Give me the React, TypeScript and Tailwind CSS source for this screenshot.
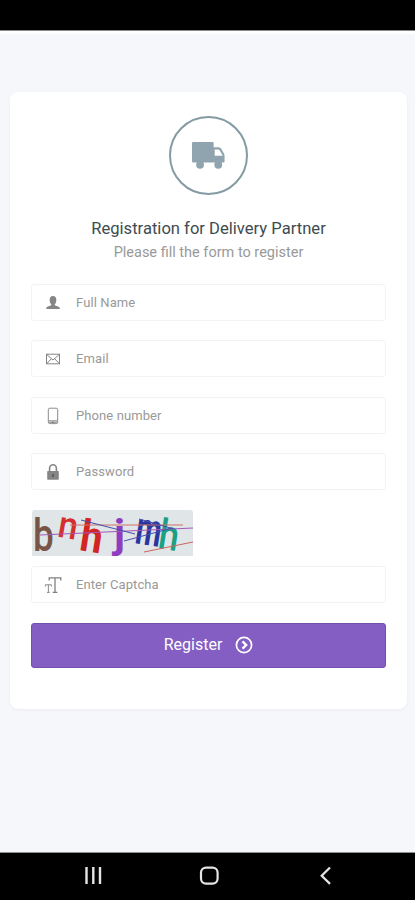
import React from 'react';

const UserIcon = () => (
  <svg width="16" height="16" viewBox="0 0 16 16" fill="#858585">
    <ellipse cx="8" cy="5.2" rx="3.3" ry="4.2" />
    <path d="M6.3 8h3.4v2.2l4 1.6c.7.3 1.1.9 1.1 1.6V14H1.2v-.6c0-.7.4-1.3 1.1-1.6l4-1.6z" />
  </svg>
);

const MailIcon = () => (
  <svg width="16" height="16" viewBox="0 0 16 16" fill="none" stroke="#858585" strokeWidth="1">
    <rect x="1.5" y="3.2" width="13" height="9.6" />
    <path d="M1.8 3.6 8 9l6.2-5.4M1.8 12.5l4.4-4.6M14.2 12.5 9.8 7.9" />
  </svg>
);

const PhoneIcon = () => (
  <svg width="18" height="18" viewBox="0 0 18 18" fill="none" stroke="#8c8c8c">
    <rect x="4.3" y="1.2" width="9.4" height="15.4" rx="1.6" />
    <path d="M4.5 13.8h9" />
    <path d="M4.8 14.4h8.4l-.8 2H5.6z" fill="#a3a3a3" stroke="none" />
    <circle cx="9" cy="15.2" r=".8" fill="#666" stroke="none" />
  </svg>
);

const LockIcon = () => (
  <svg width="18" height="18" viewBox="0 0 18 18" fill="none">
    <path d="M5.6 8.5V5.2a3.4 3.4 0 0 1 6.8 0v3.3" stroke="#858585" strokeWidth="1.6" />
    <rect x="3.2" y="8" width="11.6" height="8.8" rx=".8" fill="#858585" />
    <path d="M9 11v3" stroke="#555" strokeWidth="1.6" />
  </svg>
);

const TextIcon = () => (
  <svg width="18" height="18" viewBox="0 0 18 18" fill="none" stroke="#808080">
    <path d="M5.2 4.4V1.8h11.6v2.6M11 1.8v14.4M8.6 16.4h4.8" strokeWidth="1.3" />
    <path d="M1.4 10.6V8.8h6v1.8M4.4 8.8v7.4M3 16.4h2.8" strokeWidth=".9" />
  </svg>
);

interface FieldProps {
  icon: React.ReactNode;
  label: string;
  type?: string;
}

const Field = ({ icon, label, type = 'text' }: FieldProps) => (
  <label className="flex h-[37px] items-center rounded-[3px] border border-[#f3f3f3] bg-white">
    <span className="flex w-[42px] shrink-0 justify-center pt-px">{icon}</span>
    <input
      type={type}
      placeholder={label}
      className="w-full min-w-0 bg-transparent pt-px pl-0.5 text-[13px] tracking-[0.1px] outline-none placeholder:text-[#999]"
    />
  </label>
);

const Captcha = () => (
  <svg
    width="161"
    height="46"
    viewBox="0 0 161 46"
    className="ml-px block overflow-visible rounded-t-[3px] bg-[#e0e5e8] font-['Roboto']"
    fontSize="44"
  >
    <text transform="translate(1 41) scale(.84 1.05)" fontWeight="500" fill="#795548">b</text>
    <text transform="translate(24.5 26.5) rotate(10) scale(.8 .86)" fontWeight="500" fill="#d32f2f">n</text>
    <text transform="translate(46.5 40) rotate(9) scale(.9 1)" fontWeight="700" fill="#d32424">h</text>
    <text transform="translate(82 38) scale(.95 .93)" fontWeight="700" fill="#8e3cc0">j</text>
    <text transform="translate(102 33) rotate(9) scale(.67 1.05)" fontWeight="700" fill="#2a35a0">m</text>
    <text transform="translate(125 38) rotate(9) scale(.82 .96)" fontWeight="500" fill="#1aa184">h</text>
    <g fill="none" strokeWidth="1">
      <path d="M8 25 161 18" stroke="#a557b8" />
      <path d="M38 15h113" stroke="#d07068" />
      <path d="M49 10 103 24" stroke="#4351ac" />
      <path d="M92 31 140 18" stroke="#4351ac" />
      <path d="M107 9 142 19" stroke="#4351ac" />
      <path d="M112 42 161 32" stroke="#d0645c" />
    </g>
  </svg>
);

const App = () => {
  return (
    <div className="flex h-[900px] w-full flex-col bg-[#f5f7fb] font-['Roboto',sans-serif]">
      <div className="h-[31px] shrink-0 border-b border-[#8b8789] bg-black" />
      <div className="h-[3px] shrink-0 bg-white" />

      <main className="flex-1 pt-[58px] pr-2 pl-[10px]">
        <div className="h-[617px] rounded-lg bg-white px-[21px] pt-6 shadow-[0_1px_3px_rgba(0,0,0,0.05)]">
          <div className="mx-auto flex h-[79px] w-[79px] items-center justify-center rounded-full border-2 border-[#849ba3]">
            <svg width="35" height="29" viewBox="0 0 34 28" fill="#8fa4ae">
              <path d="M2 1h19a1 1 0 0 1 1 1v4h4.4c1.3 0 2.3.5 3 1.5l2.7 4.7c.4.6.5 1.2.5 1.9v5.8a1 1 0 0 1-1 1H2a1 1 0 0 1-1-1V2a1 1 0 0 1 1-1z" />
              <circle cx="8.8" cy="23" r="3.8" />
              <circle cx="26.5" cy="23" r="3.8" />
              <path d="M23 8.2h3.2c.8 0 1.5.4 1.9 1.1l2.7 4.9H23z" fill="#fff" />
            </svg>
          </div>

          <h1 className="mt-[23px] text-center text-[16.6px] leading-[22px] text-[#3e4b50]">
            Registration for Delivery Partner
          </h1>
          <p className="mt-[2px] text-center text-[14.5px] leading-[22px] text-[#999]">
            Please fill the form to register
          </p>

          <form className="mt-[19.5px]" onSubmit={(e) => e.preventDefault()}>
            <div className="mb-[19.5px] flex flex-col gap-[19.5px]">
              <Field icon={<UserIcon />} label="Full Name" />
              <Field icon={<MailIcon />} label="Email" />
              <Field icon={<PhoneIcon />} label="Phone number" />
              <Field icon={<LockIcon />} label="Password" type="password" />
            </div>
            <Captcha />
            <div className="mt-[10.5px]">
              <Field icon={<TextIcon />} label="Enter Captcha" />
            </div>
            <button
              type="submit"
              className="mt-[19.5px] flex h-[45px] w-full items-center justify-center gap-[13px] rounded-[3px] border border-[#7250b0] bg-[#845ec2] text-base text-white"
            >
              Register
              <svg width="18" height="18" viewBox="0 0 18 18" fill="none" stroke="#fff">
                <circle cx="9" cy="9" r="7.6" strokeWidth="1.7" />
                <path d="m7.5 5.3 3.7 3.7-3.7 3.7" strokeWidth="2.4" />
              </svg>
            </button>
          </form>
        </div>
      </main>

      <nav className="h-[48px] shrink-0 border-t border-[#8f8f8f] bg-black">
        <svg width="415" height="47" viewBox="0 0 415 47" fill="none" stroke="#e4e4e4">
          <path d="M86.5 14v17M93.3 14v17M100 14v17" strokeWidth="2.4" />
          <rect x="201" y="14.6" width="16.6" height="16" rx="5" strokeWidth="2.2" />
          <path d="m330 14.5-8.3 8.2 8.3 8.2" strokeWidth="2.2" />
        </svg>
      </nav>
    </div>
  );
};

export default App;
